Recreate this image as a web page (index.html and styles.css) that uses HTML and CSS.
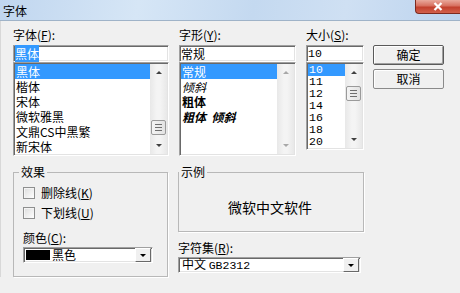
FILE: index.html
```html
<!doctype html>
<html>

<head>
    <meta charset="utf-8">
    <title>字体</title>
    <link rel="stylesheet" href="styles.css">
</head>

<body>
<div class="titlebar">
    <span class="title">字体</span>
    <span class="close">
        <svg width="12" height="9" viewBox="0 0 12 9"><path d="M2.5 1 L9.5 8 M9.5 1 L2.5 8" stroke="#fff" stroke-width="2.2"/></svg>
    </span>
</div>
<div class="dialog">
    <div class="top">
        <!-- 字体 -->
        <div class="col col1">
            <div class="lbl">字体(<u>F</u>):</div>
            <div class="edit"><span class="sel">黑体</span></div>
            <div class="list">
                <ul class="items">
                    <li class="on">黑体</li>
                    <li>楷体</li>
                    <li>宋体</li>
                    <li>微软雅黑</li>
                    <li>文鼎CS中黑繁</li>
                    <li>新宋体</li>
                </ul>
                <div class="sbar">
                    <span class="arr up"></span>
                    <span class="track end"><span class="thumb"></span></span>
                    <span class="arr down"></span>
                </div>
            </div>
        </div>
        <!-- 字形 -->
        <div class="col col2">
            <div class="lbl">字形(<u>Y</u>):</div>
            <div class="edit">常规</div>
            <div class="list">
                <ul class="items">
                    <li class="on">常规</li>
                    <li class="it">倾斜</li>
                    <li class="bd">粗体</li>
                    <li class="bd it">粗体&nbsp; 倾斜</li>
                </ul>
                <div class="sbar off">
                    <span class="arr up"></span>
                    <span class="track"></span>
                    <span class="arr down"></span>
                </div>
            </div>
        </div>
        <!-- 大小 -->
        <div class="col col3">
            <div class="lbl">大小(<u>S</u>):</div>
            <div class="edit mono">10</div>
            <div class="list small">
                <ul class="items mono">
                    <li class="on">10</li>
                    <li>11</li>
                    <li>12</li>
                    <li>14</li>
                    <li>16</li>
                    <li>18</li>
                    <li>20</li>
                </ul>
                <div class="sbar">
                    <span class="arr up"></span>
                    <span class="track start"><span class="thumb"></span></span>
                    <span class="arr down"></span>
                </div>
            </div>
        </div>
        <div class="buttons">
            <div class="btn def">确定</div>
            <div class="btn">取消</div>
        </div>
    </div>

    <div class="bottom">
        <fieldset class="group effects">
            <legend>效果</legend>
            <div class="chk"><span class="box"></span>删除线(<u>K</u>)</div>
            <div class="chk"><span class="box"></span>下划线(<u>U</u>)</div>
            <div class="lbl color-lbl">颜色(<u>C</u>):</div>
            <div class="combo color">
                <span class="swatch"></span>
                <span class="val">黑色</span>
                <span class="drop"></span>
            </div>
        </fieldset>
        <div class="right">
            <fieldset class="group sample">
                <legend>示例</legend>
                <div class="preview">微软中文软件</div>
            </fieldset>
            <div class="lbl charset-lbl">字符集(<u>R</u>):</div>
            <div class="combo charset">
                <span class="val">中文 <span class="mono">GB2312</span></span>
                <span class="drop"></span>
            </div>
        </div>
    </div>
</div>
</body>

</html>
```

FILE: styles.css
```css
* {
    margin: 0;
    padding: 0;
    box-sizing: border-box;
    list-style: none;
}

body {
    width: 460px;
    height: 293px;
    overflow: hidden;
    background: #f0f0f0;
    font: 12px/14px "Noto Sans CJK SC", sans-serif;
    color: #000;
}

u {
    text-decoration: underline;
}

.mono {
    font-family: "Liberation Mono", "Noto Sans CJK SC", monospace;
    font-size: 11.5px;
}

/* 标题栏 */
.titlebar {
    height: 21px;
    display: flex;
    justify-content: space-between;
    align-items: flex-start;
    background: linear-gradient(100deg, #c0d6ef 0%, #d6e6f6 30%, #c4d9f0 55%, #cfe0f3 75%, #bcd3ee 100%);
    border-bottom: 1px solid #9fb3c8;
}

.title {
    padding: 4px 0 0 3px;
    line-height: 13px;
}

.close {
    width: 45px;
    height: 14px;
    display: flex;
    justify-content: center;
    align-items: center;
    background: linear-gradient(#e9a99c, #d7705f 45%, #c2402d 55%, #d2604c);
    border: 1px solid #7d2a1f;
    border-top: none;
    border-right: none;
    border-radius: 0 0 0 4px;
}

.dialog {
    padding: 7px 0 0 12px;
    border-left: 1px solid #d8d8d8;
}

.top {
    display: flex;
    align-items: flex-start;
}

.col1 {
    width: 156px;
    margin-right: 10px;
}

.col2 {
    width: 117px;
    margin-right: 10px;
}

.col3 {
    width: 58px;
    margin-right: 9px;
}

.lbl {
    height: 14px;
    margin-bottom: 3px;
}

.edit {
    height: 17px;
    background: #fff;
    border: 1px solid;
    border-color: #a0a0a0 #fff #fff #a0a0a0;
    box-shadow: inset 1px 1px #696969, inset -1px -1px #e3e3e3;
    padding: 1px 0 0 1px;
    line-height: 14px;
}

.sel {
    background: #3399ff;
    color: #fff;
}

.list {
    height: 94px;
    display: flex;
    background: #fff;
    border: 1px solid;
    border-color: #a0a0a0 #fff #fff #a0a0a0;
    box-shadow: inset 1px 1px #696969, inset -1px -1px #e3e3e3;
    padding: 1px;
}

.list.small {
    height: 88px;
}

.items {
    flex: 1;
}

.items li {
    height: 15px;
    line-height: 15px;
    padding-left: 1px;
    white-space: nowrap;
}

.items.mono li {
    height: 12px;
    line-height: 12px;
}

.items li.on {
    background: #3399ff;
    color: #fff;
}

.items li.it {
    font-style: italic;
}

.items li.bd {
    font-weight: bold;
}

/* 滚动条 */
.sbar {
    width: 17px;
    display: flex;
    flex-direction: column;
    background: linear-gradient(to right, #e8e8e8, #f4f4f4 40%, #f4f4f4 60%, #e8e8e8);
}

.arr {
    height: 17px;
    display: flex;
    justify-content: center;
    align-items: center;
}

.arr::before {
    content: "";
    border-left: 3px solid transparent;
    border-right: 3px solid transparent;
}

.arr.up::before {
    border-bottom: 3px solid #404040;
}

.arr.down::before {
    border-top: 3px solid #404040;
}

.sbar.off .arr.up::before {
    border-bottom-color: #a8a8a8;
}

.sbar.off .arr.down::before {
    border-top-color: #a8a8a8;
}

.track {
    flex: 1;
    display: flex;
    flex-direction: column;
    align-items: center;
}

.track.end {
    justify-content: flex-end;
    padding-bottom: 2px;
}

.track.start {
    padding-top: 5px;
}

.thumb {
    width: 15px;
    height: 15px;
    border: 1px solid #9a9a9a;
    border-radius: 2px;
    background: linear-gradient(to right, #f4f4f4, #e2e2e2);
    display: flex;
    justify-content: center;
    align-items: center;
}

.thumb::before {
    content: "";
    width: 7px;
    height: 7px;
    background: repeating-linear-gradient(#6f6f6f 0 1px, transparent 1px 3px);
}

/* 按钮 */
.buttons {
    width: 71px;
    padding-top: 17px;
    display: flex;
    flex-direction: column;
    gap: 4px;
}

.btn {
    height: 20px;
    line-height: 18px;
    text-align: center;
    border: 1px solid #8a8a8a;
    border-radius: 2px;
    background: #f0f0f0;
    box-shadow: inset 1px 1px #fff;
}

.btn.def {
    border-color: #5a5a5a;
    box-shadow: inset 1px 1px #fff, inset -1px -1px #a0a0a0;
}

/* 下半部分 */
.bottom {
    display: flex;
    gap: 10px;
    margin-top: 10px;
    align-items: flex-start;
}

.group {
    border: 1px solid #b8b8b8;
    box-shadow: 1px 1px #fff;
}

.group legend {
    line-height: 12px;
    padding: 0 2px;
    margin-left: -4px;
}

.effects {
    width: 155px;
    padding: 5px 0 13px 9px;
}

.chk {
    height: 20px;
    display: flex;
    align-items: center;
}

.box {
    width: 12px;
    height: 12px;
    margin-right: 6px;
    border: 1px solid #8e8f8f;
    background: linear-gradient(135deg, #dcdcdc, #fff);
    box-shadow: inset 1px 1px #f4f4f4;
}

.color-lbl {
    margin: 8px 0 2px;
}

.combo {
    height: 16px;
    display: flex;
    align-items: center;
    background: #fff;
    border: 1px solid;
    border-color: #a0a0a0 #fff #fff #a0a0a0;
    box-shadow: inset 1px 1px #696969, inset -1px -1px #e3e3e3;
    padding: 1px;
}

.combo.color {
    width: 130px;
}

.swatch {
    width: 24px;
    height: 10px;
    margin: 0 2px 0 1px;
    background: #000;
}

.combo .val {
    flex: 1;
    line-height: 14px;
}

.combo.charset .val {
    padding-left: 2px;
}

.drop {
    width: 16px;
    height: 14px;
    display: flex;
    justify-content: center;
    align-items: center;
    background: #f0f0f0;
    border: 1px solid;
    border-color: #fff #696969 #696969 #fff;
}

.drop::before {
    content: "";
    border-left: 3px solid transparent;
    border-right: 3px solid transparent;
    border-top: 3px solid #000;
}

.right {
    width: 186px;
    display: flex;
    flex-direction: column;
}

.sample {
    padding: 22px 0 17px;
}

.sample legend {
    margin-left: 0;
}

.preview {
    font-size: 14px;
    line-height: 14px;
    text-align: center;
    padding-right: 2px;
}

.charset-lbl {
    margin: 9px 0 2px;
}

.combo.charset {
    width: 183px;
}
```
